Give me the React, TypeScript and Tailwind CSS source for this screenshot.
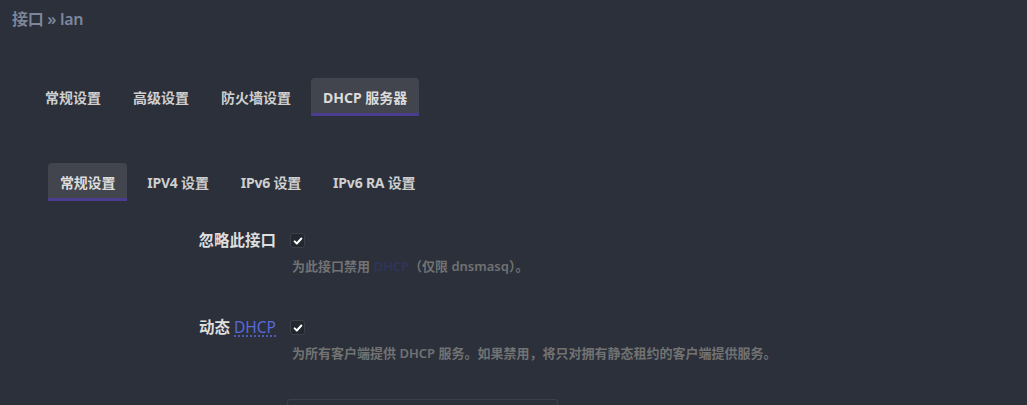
import React from 'react';

const font = "font-['Noto_Sans','Noto_Sans_CJK_SC',sans-serif]";

const CheckBox: React.FC = () => (
  <span className="flex h-[15px] w-[15px] items-center justify-center rounded-[3px] border border-[#3c3f47] bg-[#23272f]">
    <svg viewBox="0 0 12 12" className="h-[10px] w-[10px]" fill="none" stroke="#ffffff" strokeWidth="2.4" strokeLinecap="round" strokeLinejoin="round">
      <path d="M2 6.4 4.6 9 10 3" />
    </svg>
  </span>
);

const Tab: React.FC<{ label: string; active?: boolean }> = ({ label, active }) => (
  <div
    className={`flex h-[38px] items-center px-3 text-[14px] font-bold ${
      active
        ? 'rounded-t-[4px] border-b-[3px] border-[#4a3d8f] bg-[#42454d] pt-[3px] text-[#dcdcdc]'
        : 'text-[#cfcfcf]'
    }`}
  >
    {label}
  </div>
);

export default function App() {
  const topTabs = ['常规设置', '高级设置', '防火墙设置', 'DHCP 服务器'];
  const subTabs = ['常规设置', 'IPV4 设置', 'IPv6 设置', 'IPv6 RA 设置'];

  return (
    <div className={`h-screen overflow-hidden bg-[#2b303b] ${font}`}>
      <h2 className="px-3 pt-[9px] text-[16px] font-semibold leading-5 tracking-[-0.3px] text-[#7d869b]">接口 » lan</h2>

      <div className="ml-[33px] mt-[49px] flex gap-[8px]">
        {topTabs.map((t, i) => (
          <Tab key={t} label={t} active={i === 3} />
        ))}
      </div>

      <div className="ml-[48px] mt-[47px] flex gap-[8px] tracking-[-0.2px]">
        {subTabs.map((t, i) => (
          <Tab key={t} label={t} active={i === 0} />
        ))}
      </div>

      <div className="mt-[32px] flex flex-col gap-[46px]">
        <div className="flex">
          <div className="w-[276px] text-right text-[15.5px] font-bold leading-[15px] text-[#dedede]">忽略此接口</div>
          <div className="ml-[14px] flex flex-col">
            <CheckBox />
            <p className="ml-[2px] mt-[10px] text-[13px] font-semibold leading-4 text-[#727272]">
              为此接口禁用 <span className="text-[#31355a]">DHCP</span>（仅限 dnsmasq）。
            </p>
          </div>
        </div>

        <div className="flex">
          <div className="w-[276px] text-right text-[15.5px] font-bold leading-[15px] text-[#dedede]">
            动态{' '}
            <span className="font-normal text-[#5869d8] underline decoration-dotted decoration-[#5869d8] underline-offset-[3px]">DHCP</span>
          </div>
          <div className="ml-[14px] flex flex-col">
            <CheckBox />
            <p className="ml-[2px] mt-[10px] text-[13px] font-semibold leading-4 text-[#727272]">
              为所有客户端提供 DHCP 服务。如果禁用，将只对拥有静态租约的客户端提供服务。
            </p>
          </div>
        </div>
      </div>

      <div className="ml-[287px] mt-[38px] h-[36px] w-[271px] rounded-[3px] border border-[#3d4048]" />
    </div>
  );
}
